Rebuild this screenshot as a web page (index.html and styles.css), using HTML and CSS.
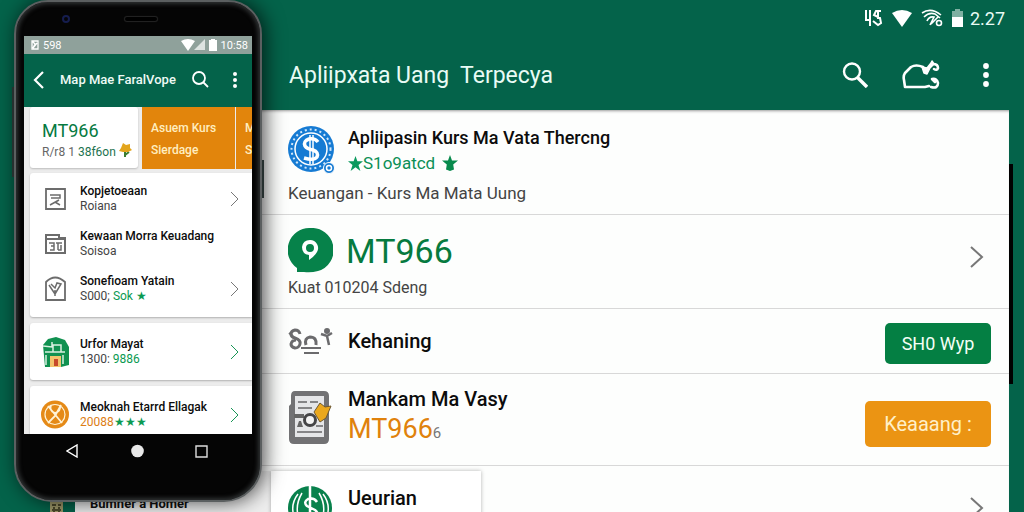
FILE: index.html
```html
<!DOCTYPE html>
<html lang="id">

<head>
    <meta charset="UTF-8">
    <meta name="viewport" content="width=device-width, initial-scale=1.0">
    <title>Apliipxata Uang Terpecya</title>
    <link rel="stylesheet" href="styles.css">
</head>

<body>
    <header class="app-bar">
        <div class="status">
            <svg width="19" height="18" viewBox="0 0 19 18" fill="none" stroke="#fff" stroke-width="2"><path d="M2 1v10h5M6 1v16M17 2h-5l-2 4 6 3 1 5-3 2-5-4M14 2v8"/></svg>
            <svg class="wifi" width="20" height="17" viewBox="0 0 20 17" fill="#fff"><path d="M0 3Q10-3 20 3L10 17z"/></svg>
            <svg class="signal" width="22" height="18" viewBox="0 0 22 18" fill="none" stroke="#fff" stroke-width="1.6"><path d="M1 4q9-6 19 2M3 8q5-5 11-3l5 4M6 12q2-5 7-4l-4 8M10 15l7-7"/><circle cx="18" cy="14" r="2.5"/></svg>
            <svg width="11" height="18" viewBox="0 0 11 18"><path fill="#7fb0a2" d="M3 0h5v2h3v6H0V2h3z"/><path fill="#fff" d="M0 8h11v10H0z"/></svg>
            <span class="clock">2.27</span>
        </div>
        <div class="toolbar">
            <h1>Apliipxata Uang&nbsp; Terpecya</h1>
            <button class="icon-btn search" aria-label="Cari">
                <svg width="26" height="26" viewBox="0 0 26 26" fill="none" stroke="#fff"><circle cx="10" cy="9.5" r="8" stroke-width="2.4"/><path stroke-width="3.4" d="M15.5 15.5L25 25"/></svg>
            </button>
            <button class="icon-btn account" aria-label="Akun">
                <svg width="38" height="30" viewBox="0 0 38 30" fill="none" stroke="#fff" stroke-width="2.6" stroke-linejoin="round" stroke-linecap="round"><path d="M21 7Q14 4 9 7L3 13Q1 16 2 20l1 7h20l4-1"/><path d="M29 27q7 2 7-4-1-5-6-4l3 3"/><path fill="#fff" stroke-width="1.5" d="M20 7l5 1 4-5 1-2 2 3-4 4-3 6-3-1z"/><path d="M31 4q5 0 5 4-1 3-4 1"/></svg>
            </button>
            <button class="icon-btn" aria-label="Menu">
                <svg width="6" height="24" viewBox="0 0 6 24" fill="#fff"><circle cx="3" cy="3" r="2.9"/><circle cx="3" cy="12" r="2.9"/><circle cx="3" cy="21" r="2.9"/></svg>
            </button>
        </div>
    </header>

    <main class="list">
        <section class="row row-app">
            <svg width="48" height="50" viewBox="0 0 48 50">
                <circle cx="23" cy="24" r="23" fill="#167bd3"/>
                <circle cx="23" cy="24" r="19.5" fill="none" stroke="#cfe6fa" stroke-width="2" stroke-dasharray="2 3"/>
                <circle cx="23" cy="24" r="16" fill="#167bd3" stroke="#fff" stroke-width="1.5"/>
                <path d="M30 17q-3-4-9-3-6 2-4 7 2 3 8 4 6 2 4 7-3 4-13 1" fill="none" stroke="#fff" stroke-width="3.5"/>
                <path d="M22 10v29M25 10v29" fill="none" stroke="#fff" stroke-width="1.5"/>
                <circle cx="41" cy="43" r="5.5" fill="#167bd3" stroke="#fff"/><circle cx="41" cy="43" r="2.5" fill="none" stroke="#fff" stroke-width="1.5"/>
            </svg>
            <div class="row-text">
                <h2>Apliipasin Kurs Ma Vata Thercng</h2>
                <p class="rating">
                    <svg width="15" height="15" viewBox="0 0 20 20" fill="#0b9a5e"><path d="M10 0l2.5 7H20l-6 5 2.5 8L10 15l-6.5 5L6 12 0 7h7.5z"/></svg>
                    <span>S1o9atcd</span>
                    <svg class="star-last" width="16" height="16" viewBox="0 0 20 20" fill="#078a4c"><path d="M10 0l2.5 7H20l-6 5 1 6-5 2-5-2 1-6-6-5h7.5z"/></svg>
                </p>
            </div>
            <p class="row-note">Keuangan - Kurs Ma Mata Uung</p>
        </section>

        <section class="row row-code">
            <svg width="45" height="45" viewBox="0 0 45 45"><path fill="#06824a" d="M22 0a22 22 0 0 1 8 43q-7 2-14 1H9v-4A22 22 0 0 1 22 0z"/><path fill="#fff" fill-rule="evenodd" d="M22 12a8 8 0 0 1 7 12q-3 5-8 8v-5q-7-1-7-8 1-7 8-7zm0 4a4 4 0 1 0 0 8 4 4 0 0 0 0-8z"/></svg>
            <div class="row-text code">MT966</div>
            <p class="row-note small">Kuat 010204 Sdeng</p>
            <a class="more" href="#" aria-label="Detail MT966"><svg width="14" height="22" viewBox="0 0 14 22" fill="none" stroke="#777" stroke-width="2"><path d="M1 1l11 10L1 21"/></svg></a>
        </section>

        <section class="row row-action">
            <svg width="45" height="27" viewBox="0 0 45 27" fill="none" stroke="#6b6b6d" stroke-width="3"><path d="M12 6q-1-4-5-4-4 1-4 4 0 3 4 4 6 2 5 6-1 4-5 4-4-1-4-4 1-4 5-4"/><path d="M1 5l4 3" stroke-width="2"/><path d="M18 17q-2-7 4-8 7 0 6 8"/><path d="M13 20h20M16 25h15" stroke-width="2"/><path d="M33 6l6 2 5-3M39 8l2 9" stroke-width="2.5"/><circle cx="39" cy="3" r="1.5"/></svg>
            <div class="row-text"><h2>Kehaning</h2></div>
            <button class="btn btn-green">SH0 Wyp</button>
        </section>

        <section class="row row-pay">
            <svg width="45" height="53" viewBox="0 0 45 53">
                <path fill="#727274" d="M7 0h29q5 0 5 5v43q0 5-5 5H6q-5 0-5-5V15l2-2V5q0-5 4-5z"/>
                <path fill="#e5e6e8" d="M7 5h29v41H7z"/>
                <path stroke="#858587" stroke-width="2" fill="none" d="M10 11h9M22 11h8M10 17h14M9 41h25M28 35h7"/>
                <path fill="#666" d="M6 23h10v4H6zM9 36l2-6h2l2 6z"/>
                <circle cx="22" cy="29" r="5.5" fill="#f4f4f4" stroke="#454547" stroke-width="3"/>
                <path fill="#eba81d" stroke="#6e5933" d="M26 21l6-9 5 4 6-1-5 12-6 4z"/>
            </svg>
            <div class="row-text">
                <h2>Mankam Ma Vasy</h2>
                <p class="price">MT966<small>6</small></p>
            </div>
            <button class="btn btn-orange">Keaaang :</button>
        </section>

        <section class="row row-last">
            <p class="behind">Bumner a Homer</p>
            <div class="card">
                <svg width="45" height="45" viewBox="0 0 45 45"><circle cx="22" cy="23" r="22" fill="#08814c"/><path d="M10 9Q0 22 9 38M35 9q10 13 1 29M14 8q-9 15-1 30M31 8q9 15 1 30" fill="none" stroke="#fff" stroke-width="1.5"/><path d="M29 17q-3-5-9-3-5 3-1 7l8 4q5 4 0 8-6 3-11-2M22 1v40" fill="none" stroke="#fff" stroke-width="2.5"/></svg>
                <h2>Ueurian</h2>
            </div>
            <a class="more" href="#" aria-label="Detail Ueurian"><svg width="14" height="22" viewBox="0 0 14 22" fill="none" stroke="#777" stroke-width="2"><path d="M1 1l11 10L1 21"/></svg></a>
        </section>
    </main>
    <div class="edge"></div>
    <svg class="stray" width="13" height="20" viewBox="0 0 13 20"><path fill="#a09a6a" d="M0 0h13v20H0z"/><path stroke="#4d4a2c" stroke-width="2" fill="none" d="M2 5h4M8 5h3M2 10h9M4 7v9M9 7v9"/></svg>

    <aside class="phone">
        <div class="phone-top">
            <span class="lens"></span>
            <span class="speaker"></span>
        </div>
        <div class="screen">
            <div class="phone-status">
                <svg width="8" height="10" viewBox="0 0 8 10" fill="none" stroke="#fff" stroke-width="1.3"><path d="M1 1h6v8H1zM1 1l3 3-2 4 4-5"/></svg>
                <span class="phone-num">598</span>
                <svg width="36" height="12" viewBox="0 0 36 12"><path fill="#fff" d="M0 2q7-4 14 0L7 12zM28 1h2V0h4v1h2v11h-8z"/><path fill="#dde3e1" d="M24 0v11H13z"/></svg>
                <span>10:58</span>
            </div>
            <div class="phone-bar">
                <button class="icon-btn" aria-label="Kembali"><svg width="11" height="18" viewBox="0 0 11 18" fill="none" stroke="#fff" stroke-width="2.2"><path d="M10 1L2 9l8 8"/></svg></button>
                <span class="phone-title">Map Mae FaralVope</span>
                <button class="icon-btn" aria-label="Cari"><svg width="17" height="17" viewBox="0 0 17 17" fill="none" stroke="#fff" stroke-width="1.8"><circle cx="7" cy="7" r="6"/><path d="M11 11l5 5"/></svg></button>
                <button class="icon-btn" aria-label="Menu"><svg width="4" height="16" viewBox="0 0 4 16" fill="#fff"><circle cx="2" cy="2" r="2"/><circle cx="2" cy="8" r="2"/><circle cx="2" cy="14" r="2"/></svg></button>
            </div>
            <div class="tabs">
                <div class="tab tab-main">
                    <strong>MT966</strong>
                    <span>R/r8 1 <b>38f6on</b>
                        <svg width="13" height="14" viewBox="0 0 13 14"><path stroke="#3c7d31" stroke-width="2" d="M6 7v7M6 12l4-3"/><path fill="#e3a51d" d="M4 0l3 2 4-1v4l2 2-4 2H4L0 8l2-3z"/></svg>
                    </span>
                </div>
                <div class="tab tab-orange">Asuem Kurs<br>Sierdage</div>
                <div class="tab tab-cut">M<br>S</div>
            </div>
            <div class="group group-first">
                <a class="item" href="#">
                    <svg width="21" height="22" viewBox="0 0 21 22" fill="none" stroke="#6c6c6c" stroke-width="1.8"><path d="M1 1h19v20H1z"/><path stroke-width="1.5" d="M5 7h10v3H6M5 17l9-5M10 14l5 3"/></svg>
                    <span class="item-text"><b>Kopjetoeaan</b><span>Roiana</span></span>
                    <svg class="chev" width="9" height="16" viewBox="0 0 9 16"><path d="M1 1l7 7-7 7"/></svg>
                </a>
                <a class="item" href="#">
                    <svg width="21" height="20" viewBox="0 0 21 20" fill="none" stroke="#6c6c6c" stroke-width="2"><path d="M1 4V1h13v3h6v15H1z"/><path d="M1 5h19"/><path stroke-width="1.5" d="M4 9h5v7H5M6 12h3M11 9h6M13 9v7M16 11v5h-3"/></svg>
                    <span class="item-text"><b>Kewaan Morra Keuadang</b><span>Soisoa</span></span>
                </a>
                <a class="item" href="#">
                    <svg width="21" height="25" viewBox="0 0 21 25" fill="none" stroke="#6c6c6c" stroke-width="1.8"><path d="M1 6q9-9 19 0v18H1z"/><path stroke-width="1.5" d="M4 9l6 9 6-10-4-1-2 5-4-4M10 14v6"/></svg>
                    <span class="item-text"><b>Sonefioam Yatain</b><span>S000; <em>Sok &#x2605;</em></span></span>
                    <svg class="chev" width="9" height="16" viewBox="0 0 9 16"><path d="M1 1l7 7-7 7"/></svg>
                </a>
            </div>
            <div class="group">
                <a class="item" href="#">
                    <svg width="27" height="30" viewBox="0 0 27 30"><path fill="#109150" d="M1 8l5-6 8-2 9 3 4 7v18l-8 2H3z"/><path fill="none" stroke="#d8f0df" stroke-width="1.5" d="M1 9l9 1V5M11 8h8v7h-8zM3 15h20M4 18v10M21 18v9"/><path fill="#f2c46c" d="M8 19h11v11H8z"/><path fill="#c74a2a" d="M12 22h4v7h-4z"/></svg>
                    <span class="item-text"><b>Urfor Mayat</b><span>1300: <em>9886</em></span></span>
                    <svg class="chev green" width="9" height="16" viewBox="0 0 9 16"><path d="M1 1l7 7-7 7"/></svg>
                </a>
            </div>
            <div class="group">
                <a class="item" href="#">
                    <svg width="28" height="29" viewBox="0 0 28 29" fill="none" stroke="#fff3d7"><circle cx="14" cy="14.5" r="14" fill="#e58a17" stroke="none"/><circle cx="14" cy="14.5" r="10" stroke-width="1.2"/><path stroke-width="1.8" d="M7 6l14 17M20 5l-6 11-7 7M10 5q-2 6 4 8 6-2 5-7"/></svg>
                    <span class="item-text"><b>Meoknah Etarrd Ellagak</b><span class="gold">20088<em>&#x2605;&#x2605;&#x2605;</em></span></span>
                    <svg class="chev green" width="9" height="16" viewBox="0 0 9 16"><path d="M1 1l7 7-7 7"/></svg>
                </a>
            </div>
        </div>
        <div class="phone-nav">
            <svg width="13" height="14" viewBox="0 0 13 14" fill="none" stroke="#fff" stroke-width="1.4"><path d="M11 1v12L1 7z"/></svg>
            <svg width="13" height="14" viewBox="0 0 13 14" fill="#e9e9e9"><circle cx="6.5" cy="7" r="6.3"/></svg>
            <svg width="13" height="14" viewBox="0 0 13 14" fill="none" stroke="#ddd" stroke-width="1.4"><path d="M1 2h11v11H1z"/></svg>
        </div>
    </aside>
</body>

</html>
```
FILE: styles.css
```css
* {
    box-sizing: border-box;
}

body {
    position: relative;
    display: flex;
    flex-direction: column;
    margin: 0;
    height: 100vh;
    overflow: hidden;
    font-family: Roboto, "Liberation Sans", sans-serif;
    background-color: #04634a;
    color: #111;
}

h1, h2, p {
    margin: 0;
}

h2 {
    font-size: 20px;
    font-weight: 500;
    line-height: 26px;
    color: #0c0c0c;
}

svg {
    display: block;
    flex: none;
}

button {
    font-family: inherit;
    border: none;
    cursor: pointer;
}

a {
    color: inherit;
    text-decoration: none;
}

.icon-btn {
    padding: 0;
    background: none;
}

/* main app bar */
.app-bar {
    flex: none;
    height: 110px;
    padding: 0 35px 0 289px;
    color: #e9fbf5;
}

.status {
    display: flex;
    align-items: center;
    justify-content: flex-end;
    height: 36px;
    margin-right: -17px;
}

.status .wifi {
    margin-left: 9px;
}

.status .signal {
    margin: 0 9px;
}

.clock {
    width: 36px;
    margin-left: 7px;
    font-size: 18px;
}

.toolbar {
    display: flex;
    align-items: center;
    height: 78px;
}

.toolbar .account {
    margin: 0 43px 0 34px;
}

h1 {
    flex: 1;
    font-size: 23px;
    font-weight: 400;
    white-space: nowrap;
}

/* list */
.list {
    flex: 1;
    min-height: 0;
    overflow: hidden;
    margin: 0 15px 0 75px;
    background-color: #fdfefd;
    box-shadow: inset 0 3px 3px -2px #999;
}

.row {
    position: relative;
    display: flex;
    flex-wrap: wrap;
    align-items: center;
    gap: 0 15px;
    padding: 0 18px 0 213px;
    border-bottom: 1px solid #d8d8d8;
}

.row-text {
    flex: 1;
}

.row-app {
    height: 105px;
    padding-top: 15px;
    align-content: flex-start;
    gap: 0 12px;
}

.row-app h2 {
    font-size: 18px;
}

.rating {
    display: flex;
    align-items: center;
    height: 24px;
    font-size: 17px;
    color: #0b8f56;
}

.star-last {
    margin-left: 7px;
}

.row-note {
    width: 100%;
    font-size: 17px;
    line-height: 36px;
    color: #444;
}

.row-note.small {
    font-size: 16px;
    line-height: 30px;
}

.row-code {
    height: 94px;
    padding-top: 13px;
    align-content: flex-start;
}

.code {
    margin-left: -2px;
    font-size: 34px;
    line-height: 44px;
    color: #067a3f;
}

.more {
    position: absolute;
    right: 25px;
    top: 31px;
}

.row-action {
    height: 65px;
}

.row-pay {
    height: 92px;
    padding-bottom: 4px;
}

.price {
    font-size: 27px;
    line-height: 34px;
    color: #e0820c;
}

.price small {
    font-size: 15px;
    color: #777;
}

.btn {
    border-radius: 5px;
    color: #f4fff6;
}

.btn-green {
    width: 106px;
    height: 41px;
    margin-top: 5px;
    font-size: 18px;
    background-color: #047f43;
}

.btn-orange {
    width: 126px;
    height: 46px;
    margin-top: 12px;
    font-size: 20px;
    color: #fff0c9;
    background-color: #eb9413;
}

.row-last {
    align-items: flex-start;
    gap: 0;
    height: 92px;
    padding: 5px 0 0;
}

.behind {
    width: 196px;
    padding: 23px 0 0 15px;
    font-size: 13px;
    font-weight: 700;
    line-height: 20px;
    background-color: #eee;
}

.card {
    display: flex;
    align-items: flex-start;
    gap: 15px;
    width: 210px;
    height: 87px;
    padding: 14px 17px;
    background-color: #fff;
    box-shadow: 0 0 4px rgba(0, 0, 0, 0.3);
}

.edge {
    position: absolute;
    top: 164px;
    right: 11px;
    width: 4px;
    height: 220px;
    background-color: #000;
}

.stray {
    position: absolute;
    bottom: -8px;
    left: 50px;
}

/* phone */
.phone {
    position: absolute;
    top: 0;
    left: 14px;
    width: 248px;
    padding: 0 10px 33px;
    border: 2px solid #5b5f60;
    border-radius: 34px 34px 38px 38px;
    background-color: #050505;
    box-shadow: inset 0 0 4px 2px #303334, 3px 0 20px rgba(0, 0, 0, 0.7);
}

.phone::before,
.phone::after {
    content: "";
    position: absolute;
    width: 2px;
    background-color: #26302f;
}

.phone::before {
    top: 85px;
    left: -4px;
    height: 90px;
}

.phone::after {
    top: 158px;
    right: -4px;
    height: 38px;
}

.phone-top {
    display: flex;
    align-items: center;
    gap: 55px;
    height: 34px;
    padding-left: 36px;
}

.lens {
    width: 8px;
    height: 8px;
    border: 2px solid #151d4e;
    border-radius: 50%;
}

.speaker {
    width: 32px;
    height: 4px;
    border-radius: 2px;
    background-color: #000;
    box-shadow: 0 0 1px 1px #252525;
}

.screen {
    height: 398px;
    margin: 0 -2px;
    overflow: hidden;
    background-color: #ececec;
}

.phone-status {
    display: flex;
    align-items: center;
    gap: 4px;
    height: 18px;
    padding: 0 4px 0 7px;
    font-size: 11px;
    color: #fff;
    background-color: #8fa19b;
}

.phone-num {
    flex: 1;
}

.phone-bar {
    display: flex;
    align-items: center;
    height: 53px;
    padding: 0 15px 2px 9px;
    background-color: #04634a;
}

.phone-title {
    flex: 1;
    margin-left: 16px;
    font-size: 13px;
    font-weight: 500;
    white-space: nowrap;
    color: #eefaf5;
}

.phone-bar .icon-btn:last-child {
    margin-left: 24px;
}

.tabs {
    display: flex;
    gap: 4px;
    height: 62px;
    padding-left: 6px;
}

.tab {
    flex: none;
    font-size: 12px;
}

.tab-main {
    width: 108px;
    height: 61px;
    padding: 12px 0 0 12px;
    border-radius: 3px;
    background-color: #fff;
    box-shadow: 0 1px 2px rgba(0, 0, 0, 0.2);
}

.tab-main strong {
    display: block;
    font-size: 18px;
    font-weight: 400;
    line-height: 24px;
    color: #067a3f;
}

.tab-main span {
    display: flex;
    align-items: center;
    gap: 3px;
    white-space: nowrap;
    color: #666;
}

.tab-main b {
    font-weight: 400;
    color: #1d7350;
}

.tab-main svg {
    margin-bottom: 3px;
}

.tab-orange,
.tab-cut {
    padding: 10px 0 0 9px;
    font-weight: 500;
    line-height: 22px;
    color: #ffeec0;
    background-color: #e2850c;
}

.tab-orange {
    width: 93px;
}

.tab-cut {
    width: 40px;
    margin-left: -3px;
}

.group {
    margin: 0 0 6px 6px;
    padding: 6px 0;
    border-radius: 3px 0 0 3px;
    background-color: #fff;
    box-shadow: 0 1px 2px rgba(0, 0, 0, 0.25);
}

.group-first {
    margin-top: 4px;
    padding: 3px 0 6px;
}

.item {
    display: grid;
    grid-template-columns: 50px 1fr 22px;
    align-items: center;
    height: 45px;
}

.item > svg:first-child {
    justify-self: center;
}

.item-text b,
.item-text span {
    display: block;
    font-size: 12px;
    line-height: 15px;
    white-space: nowrap;
    color: #444;
}

.item-text b {
    font-weight: 500;
    color: #0c0c0c;
}

.item-text em {
    font-style: normal;
    color: #0b9a52;
}

.item-text .gold {
    color: #dc7d14;
}

.chev {
    fill: none;
    stroke: #777;
}

.chev.green {
    stroke: #189556;
}

.phone-nav {
    display: flex;
    justify-content: space-between;
    align-items: center;
    height: 33px;
    padding: 0 42px 0 40px;
}
```
